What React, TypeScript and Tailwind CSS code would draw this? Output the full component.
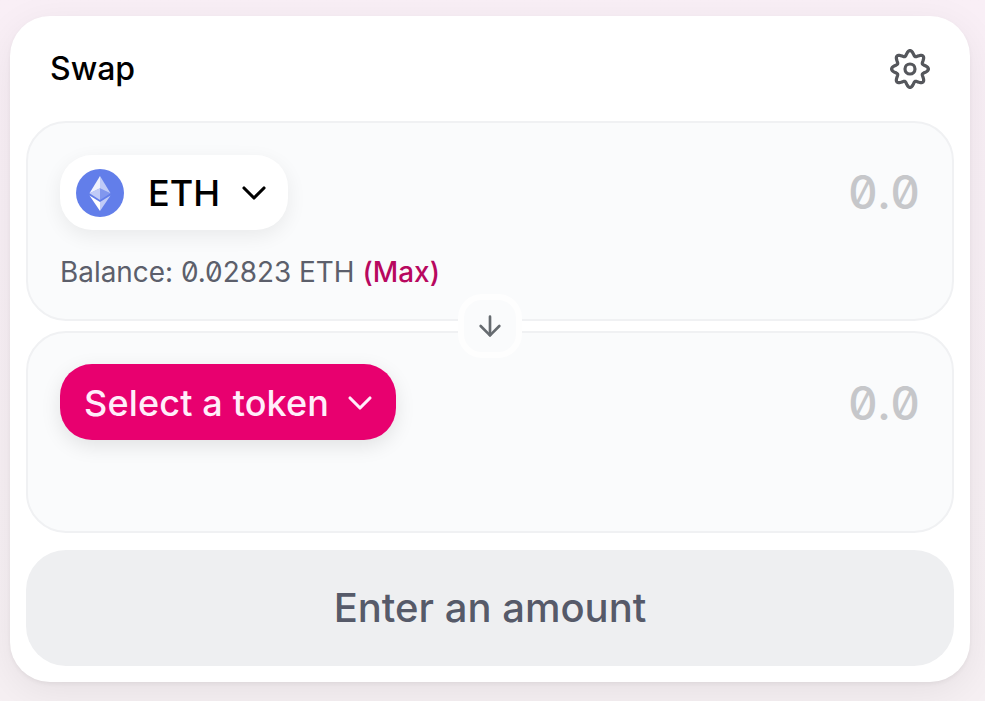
import { ChevronDown, ArrowDown } from 'lucide-react'

// eight round teeth, traced as a wave around the centre
function gearPath() {
  const points: string[] = []
  for (let i = 0; i < 240; i++) {
    const a = (i / 240) * Math.PI * 2
    const r = 15.9 + 2.5 * Math.cos(8 * a)
    points.push(`${(24 + r * Math.sin(a)).toFixed(2)} ${(24 - r * Math.cos(a)).toFixed(2)}`)
  }
  return `M${points.join('L')}Z`
}

function GearIcon() {
  return (
    <svg width="48" height="48" viewBox="0 0 48 48" fill="none" stroke="#55575c" strokeWidth="3.2" strokeLinejoin="round">
      <path d={gearPath()} />
      <circle cx="24" cy="24" r="5" />
    </svg>
  )
}

function EthLogo() {
  return (
    <svg width="48" height="48" viewBox="0 0 48 48" className="shrink-0">
      <circle cx="24" cy="24" r="24" fill="#627eea" />
      <path d="M24 7v12.3l10.5 5z" fill="#ffffff" fillOpacity="0.6" />
      <path d="M24 7L13.5 24.3l10.5-5z" fill="#ffffff" fillOpacity="0.9" />
      <path d="M24 33v9l10.5-15.5z" fill="#ffffff" fillOpacity="0.6" />
      <path d="M24 42v-9l-10.5-6.5z" fill="#ffffff" />
      <path d="M24 30.9l10.5-6.6L24 19.3z" fill="#ffffff" fillOpacity="0.2" />
      <path d="M13.5 24.3L24 30.9V19.3z" fill="#ffffff" fillOpacity="0.6" />
    </svg>
  )
}

function Amount() {
  return (
    <div className="text-[46px] leading-none font-medium tabular-nums slashed-zero text-[#c6c7ca]">
      0.0
    </div>
  )
}

export default function App() {
  return (
    <div className="w-[985px] h-[701px] overflow-hidden bg-gradient-to-b from-[#f9eff6] to-[#f6f0f3] pt-4 pl-2.5 font-['Inter',sans-serif]">
      <div className="relative w-[960px] h-[666px] bg-white rounded-[40px] shadow-[0_2px_4px_rgba(0,0,0,0.05),0_10px_40px_rgba(0,0,0,0.07)] px-4 flex flex-col">
        {/* Header */}
        <div className="h-[105px] shrink-0 flex items-center justify-between pl-6 pr-5">
          <div className="text-[32px] font-medium leading-none text-black">Swap</div>
          <GearIcon />
        </div>

        {/* From */}
        <div className="h-[200px] shrink-0 rounded-[40px] border-2 border-[#f0f1f3] bg-[#fafbfc] pt-[32px] px-[32px]">
          <div className="flex items-start justify-between">
            <div className="w-[228px] h-[75px] rounded-[32px] bg-white shadow-[0_6px_20px_rgba(0,0,0,0.07)] flex items-center pl-4">
              <EthLogo />
              <span className="ml-6 text-[36px] font-[450] leading-none text-black">ETH</span>
              <ChevronDown size={40} strokeWidth={1.9} className="ml-[14px] -mr-2 shrink-0 text-black" />
            </div>
            <div className="pt-[14px]"><Amount /></div>
          </div>
          <div className="mt-[26px] text-[27.9px] leading-8 text-[#5c5f6b] slashed-zero">
            Balance: 0.02823 ETH <span className="font-medium text-[#b8085f]">(Max)</span>
          </div>
        </div>

        {/* To */}
        <div className="mt-[10px] h-[202px] shrink-0 rounded-[40px] border-2 border-[#f0f1f3] bg-[#fafbfc] pt-[31px] px-[32px]">
          <div className="flex items-start justify-between">
            <div className="w-[336px] h-[76px] rounded-[32px] bg-[#e8006f] shadow-[0_6px_20px_rgba(0,0,0,0.1)] flex items-center pl-6 pt-[2px]">
              <span className="text-[36px] tracking-[0.15px] font-medium leading-none text-[#ffeefa]">Select a token</span>
              <ChevronDown size={40} strokeWidth={1.9} className="ml-[11px] -mr-2 shrink-0 text-[#ffeefa]" />
            </div>
            <div className="pt-[16px]"><Amount /></div>
          </div>
        </div>

        {/* Submit */}
        <div className="mt-[17px] h-[116px] shrink-0 rounded-[40px] bg-[#eeeff1] flex items-center justify-center">
          <span className="text-[40px] font-medium leading-none text-[#565a69]">Enter an amount</span>
        </div>

        {/* Direction arrow overlaps both panels */}
        <div className="absolute left-[448px] top-[278px] w-16 h-16 rounded-[24px] bg-[#fafbfc] border-[6px] border-[#fefefe] flex items-center justify-center">
          <ArrowDown size={32} strokeWidth={2} className="text-[#666b70]" />
        </div>
      </div>
    </div>
  )
}
